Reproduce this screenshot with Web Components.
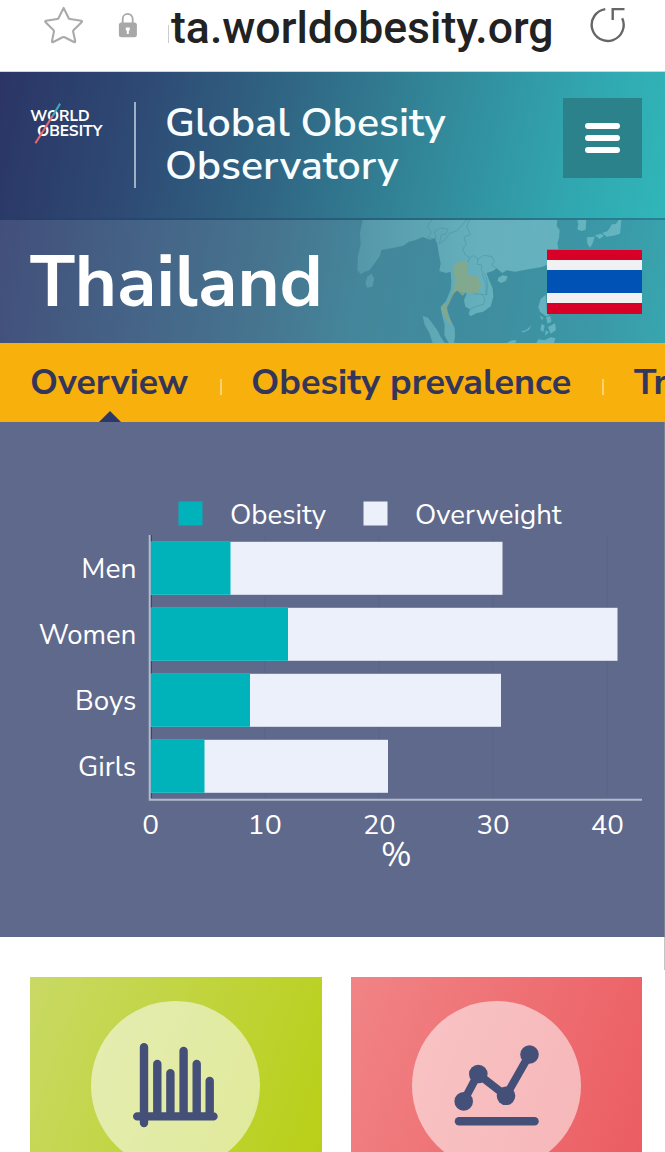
<!DOCTYPE html>
<html lang="en">
<head>
<meta charset="utf-8">
<meta name="viewport" content="width=device-width">
<title>Global Obesity Observatory - Thailand</title>
<style>
html,body{margin:0;padding:0;background:#fff;overflow:hidden;height:1152px}
body{font-family:"Nunito Sans",Nunito,Lato,"Open Sans",sans-serif;color:#fff}
</style>
</head>
<body>
<obs-page></obs-page>
<script>
const FAMILY='"Nunito Sans", Nunito, Lato, "Open Sans", sans-serif';
const ctx=document.createElement('canvas').getContext('2d');

/* Sets one line of svg text so that its ink spans from x to x+w. */
function fit(t){
  const size=+t.getAttribute('font-size'),weight=t.getAttribute('font-weight')||400;
  const fam=t.getAttribute('font-family')||FAMILY;
  t.setAttribute('font-family',fam);
  ctx.font=`${weight} ${size}px ${fam}`;
  const m=ctx.measureText(t.textContent);
  const s=+t.dataset.w/(m.actualBoundingBoxLeft+m.actualBoundingBoxRight);
  t.setAttribute('transform',`translate(${t.dataset.x} ${t.dataset.y}) scale(${s} 1) translate(${m.actualBoundingBoxLeft} 0)`);
}

function define(name,html,after){
  const tpl=document.createElement('template');
  tpl.innerHTML=html;
  customElements.define(name,class extends HTMLElement{
    constructor(){super();this.attachShadow({mode:'open'}).append(tpl.content.cloneNode(true));}
    connectedCallback(){
      if(after)after(this,this.shadowRoot);
      this.shadowRoot.querySelectorAll('text[data-w]').forEach(fit);
    }
  });
}

/* One line of text; base is the distance from the top of the box to the baseline. */
define('fit-text',`<style>:host{display:block;flex:none}svg{display:block;overflow:visible}</style><svg><text></text></svg>`,(el,r)=>{
  const svg=r.querySelector('svg'),t=r.querySelector('text'),a=n=>el.getAttribute(n);
  svg.setAttribute('width',a('w'));svg.setAttribute('height',a('h'));
  t.textContent=a('label');
  t.dataset.x=0;t.dataset.y=a('base');t.dataset.w=a('w');
  t.setAttribute('font-size',a('size'));t.setAttribute('font-weight',a('weight')||400);
  t.setAttribute('fill','currentColor');
  if(a('family'))t.setAttribute('font-family',a('family'));
});

define('url-bar',`<style>
:host{display:flex;height:71px;background:#fff;color:#222;border-bottom:1px solid #ccd5de;box-sizing:content-box}
svg{flex:none;display:block}
.star{margin:5px 0 0 44px}.lock{margin:12px 0 0 34px}.caret{width:1px;height:18px;margin:25px 2px 0 30px;background:#ccc}
.re{margin:6px 0 0 38.5px}
</style>
<svg class="star" width="40" height="40" viewBox="0 0 40 40"><path d="M19.6 2.9 L24.6 13 Q25 13.9 26 14 L37.3 15.8 Q38.6 16.2 37.6 17.3 L29.7 25 Q29 25.8 29.2 26.8 L31.2 36 Q31.3 37.6 29.9 37 L20.6 32.2 Q19.6 31.7 18.6 32.2 L9.3 37 Q7.8 37.6 8 36 L9.9 26.8 Q10.1 25.8 9.4 25 L1.6 17.3 Q.7 16.2 2 15.8 L13.2 14 Q14.2 13.9 14.6 13 Z" fill="none" stroke="#aaa" stroke-width="2.1" stroke-linejoin="round"/></svg>
<svg class="lock" width="20" height="27" viewBox="0 0 20 27"><path d="M4.7 12V6.8a5 5 0 0 1 10 0V12" fill="none" stroke="#a8a8a8" stroke-width="1.8"/><rect x=".9" y="10.5" width="18" height="14.7" rx="2.5" fill="#a8a8a8"/><path d="M7.8 15.5h4v2.5l-1 1v3h-2v-3l-1-1z" fill="#fff"/></svg>
<div class="caret"></div>
<fit-text label="ta.worldobesity.org" w="380.5" h="60" base="42.8" size="44.5" weight="500" family="Roboto"></fit-text>
<svg class="re" width="36" height="38" viewBox="0 0 36 38"><path d="M15.3 3.1A16 16 0 1 0 32.2 12.2M22.7 14V3.1H34.5" fill="none" stroke="#666" stroke-width="2.4"/></svg>`);

define('world-logo',`<style>:host{display:block;width:76px;height:44px;flex:none}svg{display:block;overflow:visible}</style>
<svg width="76" height="44" viewBox="30 102 76 44" fill="#fff">
<text font-size="15.2" font-weight="700" data-x="30.2" data-y="120.8" data-w="59">WORLD</text>
<text font-size="15.2" font-weight="700" data-x="37" data-y="136.4" data-w="66">OBESITY</text>
<path d="M60.1 103.6L51.6 117.7" stroke="#3cabb9" stroke-width="2.1"/><path d="M52.4 116.2L35.4 143.3" stroke="#e8686f" stroke-width="2.1"/></svg>`);

define('menu-button',`<style>:host{display:flex;flex-direction:column;justify-content:center;align-items:center;gap:6px;width:79px;height:79.5px;background:#2b828b;flex:none}
i{display:block;width:35.5px;height:6px;border-radius:3px;background:#fff}</style><i></i><i></i><i></i>`);

define('site-header',`<style>
:host{display:flex;box-sizing:border-box;height:148px;padding:26px 23px 0 30px;align-items:flex-start;
background:linear-gradient(102deg,#2b3565 0%,#2e4b75 22%,#306784 43%,#32899a 65%,#31a5af 84%,#30b6b9 100%);border-bottom:2px solid rgba(30,70,105,.45)}
world-logo{margin-top:4px}
.line{width:1.5px;height:86px;margin:4px 31px 0 28px;background:#9fb2c5;flex:none}
.name{flex:1;color:#f8fdff}
</style>
<world-logo></world-logo><div class="line"></div>
<div class="name"><fit-text label="Global Obesity" w="279" h="43" base="38.2" size="40" weight="600"></fit-text>
<fit-text label="Observatory" w="232" h="43" base="38.2" size="40" weight="600"></fit-text></div>
<menu-button></menu-button>`);

define('thai-flag',`<style>:host{display:flex;flex-direction:column;width:95.5px;height:64px;flex:none}
i{flex:1;background:#f1f0f2}.r{background:#d80027}.b{flex:2.15;background:#0052b4}</style>
<i class="r"></i><i></i><i class="b"></i><i></i><i class="r"></i>`);

define('asia-map',`<style>:host{display:block}svg{display:block}</style>
<svg width="325" height="123" viewBox="0 15 975 369">
<defs><linearGradient id="land" gradientUnits="userSpaceOnUse" x1="50" y1="0" x2="420" y2="0"><stop offset="0" stop-color="#82c9d2" stop-opacity=".26"/><stop offset="1" stop-color="#82c9d2" stop-opacity=".58"/></linearGradient></defs>
<g fill="url(#land)">
<path d="M68 15H652L650 32 659 46 657 70 652 84 655 103H621V150L605 156 570 162 548 166 525 170 500 166 487 174 470 160 458 168 440 174 447 195 458 220 460 245 452 274 430 290 410 294 392 304 386 297 390 283 376 275 372 256 380 235 350 226 334 241 328 262 320 272 324 292 332 316 344 340 345 364 342 384H326L313 360 314 330 306 300 302 275 318 258 332 225 334 200 332 170 318 174 298 168 302 145 296 115 292 86 284 70 270 74 248 66 225 76 206 80 190 92 160 98 142 102 124 105 120 122 104 145 88 166 74 170 62 178 52 165 54 120 62 90 60 55Z"/>
<path d="M94 176L102 190 98 214 82 218 76 206 82 185Z"/>
<path d="M475 188L488 181 503 184 498 197 484 204 473 198Z"/>
<path d="M248 303L264 308 276 324 292 346 302 366 314 384H278L268 354 254 329Z"/>
<path d="M712 15H739L737 44 724 48 712 43 715 28Z"/>
<path d="M741 67L764 65 758 85 750 98 742 86ZM765 61L784 56 791 63 779 72ZM786 54L802 49 811 37 815 28 828 27 836 15H844L840 56 820 62 800 65Z"/>
<path d="M617 239L621 293 628 301 618 304 600 290 595 276 602 252ZM598 303L610 307 607 316ZM618 306L631 304 634 320 623 326ZM605 326L614 332 610 351 601 345ZM624 336L645 325 648 345 632 356ZM617 346L627 352 615 362ZM589 384L596 373 613 376 632 367 646 369 642 384ZM542 350L560 344 574 331 567 344 552 352ZM500 384L516 376 530 376 526 384Z"/>
</g>
<path d="M345 146L360 139 381 141 384 160 381 179 403 180 416 190 424 210 414 232 396 237 379 230 368 243 352 227 342 235 326 268 319 281 322 300 335 325 324 322 310 298 302 282 314 263 320 269 332 246 343 217 345 190 339 167Z" fill="#8aa880" fill-opacity=".78"/>
<g fill="none" stroke="#438fa2" stroke-width="2" stroke-opacity=".75"><path d="M275 15L262 35 274 52 264 68 288 73 284 48 304 39 324 42 318 56 304 60 298 86 316 73 330 54 350 48 368 28 379 15M388 15L380 35 391 58 372 67 378 88 368 102 376 120 389 128 401 122 414 132 432 121 456 125 462 138 456 151 468 160M389 128L384 142M414 132L412 148 426 150 423 165 438 184 443 209 440 240 425 238 400 236M425 238L435 250 432 267 410 274 390 283M426 176L438 207 438 238"/></g>
</svg>`);

define('country-banner',`<style>
:host{display:flex;position:relative;box-sizing:border-box;height:123px;padding:29.5px 23px 0 30px;align-items:flex-start;justify-content:space-between;
background:linear-gradient(100deg,#424f7a 0%,#456487 22%,#46748f 40%,#44869b 54%,#3e8fa0 76%,#3b99a7 90%,#37a7af 100%)}
asia-map{position:absolute;right:0;top:0}thai-flag{position:relative}
</style><asia-map></asia-map>
<fit-text label="Thailand" w="289" h="64" base="55.5" size="71.5" weight="700"></fit-text><thai-flag></thai-flag>`);

define('nav-item',`<style>:host{display:block;position:relative;height:79px;flex:none;color:#33365a}
:host([active])::after{content:"";position:absolute;left:50%;bottom:0;margin-left:-11px;border:11px solid transparent;border-top:0;border-bottom-color:#2d3869}
</style><slot></slot>`);
define('page-nav',`<style>:host{display:flex;height:79px;padding-left:31px;background:#f8b00d;overflow:hidden}
.sep{flex:none;width:2px;height:16px;margin:36px 30.5px 0 30.5px;background:#fbd276}</style>
<nav-item active><fit-text label="Overview" w="158" h="79" base="51" size="35.5" weight="700"></fit-text></nav-item><div class="sep"></div>
<nav-item><fit-text label="Obesity prevalence" w="319" h="79" base="51" size="35.5" weight="700"></fit-text></nav-item><div class="sep"></div>
<nav-item><fit-text label="Trends" w="113" h="79" base="51" size="35.5" weight="700"></fit-text></nav-item>`);

define('prevalence-chart',`<style>:host{display:block;height:515px;background:#5f698b}svg{display:block}</style>
<svg width="665" height="515" viewBox="0 422 665 515"><g class="plot"></g>
<rect x="178.5" y="501.5" width="24" height="24" fill="#00b3bb"/><rect x="363.5" y="501.5" width="24" height="24" fill="#ecf0fb"/>
<g fill="#fff" font-size="27">
<text font-size="27.5" data-x="231" data-y="523.7" data-w="95">Obesity</text><text font-size="27.5" data-x="416" data-y="523.7" data-w="146">Overweight</text>
<text font-size="27.5" data-x="83.3" data-y="578" data-w="51.5">Men</text><text font-size="27.5" data-x="38.7" data-y="644" data-w="96">Women</text>
<text font-size="27.5" data-x="77" data-y="710" data-w="58">Boys</text><text font-size="27.5" data-x="79" data-y="776" data-w="56">Girls</text>
<text font-size="27" data-x="143.3" data-y="834" data-w="14.5">0</text><text font-size="27" data-x="250.7" data-y="834" data-w="29.8">10</text><text font-size="27" data-x="364" data-y="834" data-w="30.5">20</text><text font-size="27" data-x="477.5" data-y="834" data-w="31">30</text><text font-size="27" data-x="591.7" data-y="834" data-w="31">40</text>
<text font-size="33.5" data-x="382" data-y="866" data-w="28.5">%</text></g></svg>`,(el,r)=>{
  let s='';
  for(const x of [265,379,493,607])s+=`<path d="M${x} 535V798" stroke="#58648a"/>`;
  s+='<path d="M151.2 535V798" stroke="#3b405c" stroke-width="1.4"/>';
  [[230.5,502.5],[288,617.5],[250,501],[204.5,388]].forEach(([a,b],i)=>{
    const y=541.8+66*i;
    s+=`<rect x="150.5" y="${y}" width="${b-150.5}" height="53" fill="#ecf0fb"/><rect x="150.5" y="${y}" width="${a-150.5}" height="53" fill="#00b3bb"/>`;
  });
  s+='<path d="M149.7 535V799.7H642" fill="none" stroke="#b4bacd" stroke-width="2"/>';
  r.querySelector('.plot').innerHTML=s;
});

define('topic-card',`<style>:host{display:block;flex:1;height:220px;background:linear-gradient(110deg,var(--from),var(--to))}
.disc{width:169px;height:169px;margin:24px auto 0;border-radius:50%;background:rgba(255,255,255,.54);display:block}
.wrap{display:flow-root}::slotted(svg){display:block}</style><div class="wrap"><div class="disc"><slot></slot></div></div>`);

define('topic-cards',`<style>:host{display:flex;gap:29px;padding:40px 23px 0 30px;height:175px;overflow:hidden;background:#fff}
.g{--from:#c9d965;--to:#b8cf13}.r{--from:#f18486;--to:#eb5b60}</style>
<topic-card class="g"><svg width="169" height="169" viewBox="0 0 169 169"><g fill="none" stroke="#455079" stroke-width="8.4" stroke-linecap="round"><path d="M53 46.2V122M66.3 63V115M79.4 72.3V115M92.6 50V115M105.7 63V115M118.7 80V115M46.2 115.4H122.5"/></g></svg></topic-card>
<topic-card class="r"><svg width="169" height="169" viewBox="0 0 169 169"><path d="M51.5 100.3L66 73 94 94.8 117.5 53.5" fill="none" stroke="#455079" stroke-width="8"/><g fill="#455079"><circle cx="51.7" cy="100.4" r="9.3"/><circle cx="66.3" cy="73" r="9.3"/><circle cx="94" cy="94.8" r="9.3"/><circle cx="117.5" cy="53.5" r="9.3"/></g><path d="M47 120.2H122.5" stroke="#455079" stroke-width="8.5" stroke-linecap="round"/></svg></topic-card>`);

define('obs-page',`<style>:host{display:block;position:relative;width:665px;height:1152px;overflow:hidden;background:#fff}
.thumb{position:absolute;right:0;top:422px;width:1px;height:548px;background:rgba(150,150,150,.55)}</style>
<url-bar></url-bar><site-header></site-header><country-banner></country-banner><page-nav></page-nav><prevalence-chart></prevalence-chart><topic-cards></topic-cards><div class="thumb"></div>`);
</script>
</body>
</html>
